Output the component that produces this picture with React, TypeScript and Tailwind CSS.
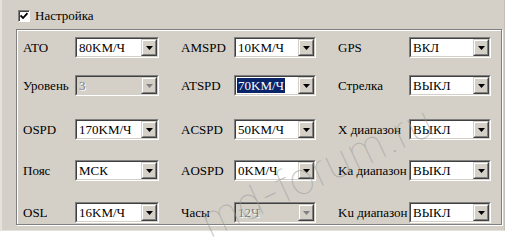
import React from "react";

type ComboProps = { value: string; disabled?: boolean; selected?: boolean };

function Combo({ value, disabled, selected }: ComboProps) {
  return (
    <div className="h-[21px] w-full border border-t-[#808080] border-l-[#808080] border-b-white border-r-white">
      <div
        className={
          "h-full w-full flex border border-t-[#404040] border-l-[#404040] border-b-[#d4d0c8] border-r-[#d4d0c8] " +
          (disabled ? "bg-[#d4d0c8]" : "bg-white")
        }
      >
        <div className="flex-1 flex items-center pl-[1px] overflow-hidden">
          {selected ? (
            <span className="bg-[#0a246a] text-white px-[1px] leading-[15px] text-[13px]">{value}</span>
          ) : (
            <span
              className={
                "px-[1px] leading-[15px] text-[13px] " +
                (disabled ? "text-[#808080] [text-shadow:1px_1px_0_#ffffff]" : "text-black")
              }
            >
              {value}
            </span>
          )}
        </div>
        <div className="w-[16px] h-full border border-t-[#d4d0c8] border-l-[#d4d0c8] border-b-[#404040] border-r-[#404040]">
          <div className="w-full h-full bg-[#d4d0c8] border border-t-white border-l-white border-b-[#808080] border-r-[#808080] flex items-center justify-center">
            <svg width="7" height="4" viewBox="0 0 7 4">
              <path d="M0 0H7L3.5 4Z" fill={disabled ? "#808080" : "#000"} />
            </svg>
          </div>
        </div>
      </div>
    </div>
  );
}

function Label({ text, pad }: { text: string; pad?: boolean }) {
  return (
    <div className={"h-[21px] self-end flex items-center text-[13px] text-black whitespace-nowrap " + (pad ? "pl-[22px]" : "")}>
      {text}
    </div>
  );
}

function Cell({ children }: { children: React.ReactNode }) {
  return <div className="self-end">{children}</div>;
}

const rows: [string, ComboProps, string, ComboProps, string, ComboProps][] = [
  ["ATO", { value: "80KM/Ч" }, "AMSPD", { value: "10KM/Ч" }, "GPS", { value: "ВКЛ" }],
  ["Уровень", { value: "3", disabled: true }, "ATSPD", { value: "70KM/Ч", selected: true }, "Стрелка", { value: "ВЫКЛ" }],
  ["OSPD", { value: "170KM/Ч" }, "ACSPD", { value: "50KM/Ч" }, "X диапазон", { value: "ВЫКЛ" }],
  ["Пояс", { value: "МСК" }, "AOSPD", { value: "0KM/Ч" }, "Ka диапазон", { value: "ВЫКЛ" }],
  ["OSL", { value: "16KM/Ч" }, "Часы", { value: "12Ч", disabled: true }, "Ku диапазон", { value: "ВЫКЛ" }],
];

export default function App() {
  return (
    <div className="w-[509px] h-[248px] bg-white relative overflow-hidden [font-family:'Liberation_Serif','Times_New_Roman',serif]">
      <div className="w-[505px] h-[231px] bg-[#d4d0c8] border-l-2 border-b border-r border-l-[#e4e2dd] border-b-[#e4e2dd] border-r-[#c4c0b8] pt-[10px] pl-[14px]">
        <div className="flex items-center h-[12px] pl-[2px]">
          <div className="w-[12px] h-[12px] bg-white border border-t-[#808080] border-l-[#808080] border-b-white border-r-white flex items-center justify-center shadow-[inset_1px_1px_0_#404040]">
            <svg width="8" height="8" viewBox="0 0 8 8">
              <path d="M0.5 3.5L3 6L7.5 1.2" stroke="#000" strokeWidth="1.8" fill="none" />
            </svg>
          </div>
          <span className="ml-[5px] text-[13px] text-black">Настройка</span>
        </div>
        <div className="mt-[7px] w-[486px] h-[196px] border border-[#808080] shadow-[inset_1px_1px_0_#ffffff,1px_1px_0_#ffffff] pl-[6px]">
          <div className="grid grid-cols-[52px_84px_75px_82px_93px_82px] grid-rows-[28px_38px_44px_41px_42px]">
            {rows.map((r, i) => (
              <React.Fragment key={i}>
                <Label text={r[0]} />
                <Cell>
                  <Combo {...r[1]} />
                </Cell>
                <Label text={r[2]} pad />
                <Cell>
                  <Combo {...r[3]} />
                </Cell>
                <Label text={r[4]} pad />
                <Cell>
                  <Combo {...r[5]} />
                </Cell>
              </React.Fragment>
            ))}
          </div>
        </div>
      </div>
      <div className="absolute left-[212px] top-[200px] origin-bottom-left -rotate-[25deg] text-[44px] leading-none [font-family:Inter,sans-serif] font-thin text-[#9c9c9c] opacity-60 whitespace-nowrap pointer-events-none">
        md-forum.ru
      </div>
    </div>
  );
}
